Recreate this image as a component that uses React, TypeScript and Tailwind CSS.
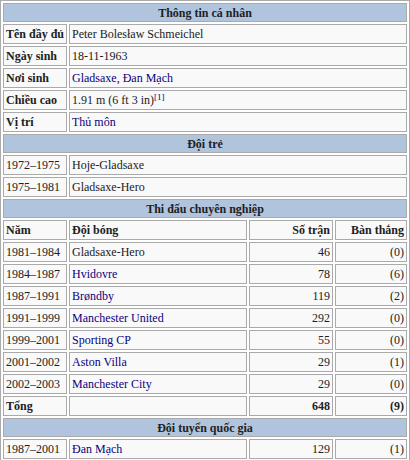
import React from 'react';

const LINK = 'text-[#0b0080]';

interface Career {
  years: string;
  club: string;
  link?: boolean;
  apps: string;
  goals: string;
}

const career: Career[] = [
  { years: '1981–1984', club: 'Gladsaxe-Hero', apps: '46', goals: '(0)' },
  { years: '1984–1987', club: 'Hvidovre', link: true, apps: '78', goals: '(6)' },
  { years: '1987–1991', club: 'Brøndby', link: true, apps: '119', goals: '(2)' },
  { years: '1991–1999', club: 'Manchester United', link: true, apps: '292', goals: '(0)' },
  { years: '1999–2001', club: 'Sporting CP', link: true, apps: '55', goals: '(0)' },
  { years: '2001–2002', club: 'Aston Villa', link: true, apps: '29', goals: '(1)' },
  { years: '2002–2003', club: 'Manchester City', link: true, apps: '29', goals: '(0)' },
];

const cell =
  'border border-[#aaaaaa] bg-[#f9f9f9] px-[2px] py-0 h-[20px] leading-[14px] align-middle whitespace-nowrap overflow-hidden';
const head =
  'border border-[#aaaaaa] bg-[#b0c4de] px-[2px] py-0 h-[19px] leading-[14px] text-center font-bold whitespace-nowrap';

const Header = ({ title }: { title: string }) => (
  <tr>
    <th colSpan={4} className={head}>
      {title}
    </th>
  </tr>
);

const InfoRow = ({ label, children }: { label: string; children: React.ReactNode }) => (
  <tr>
    <th className={`${cell} text-left font-bold`}>{label}</th>
    <td colSpan={3} className={cell}>
      {children}
    </td>
  </tr>
);

export default function App() {
  return (
    <div className="w-[410px] bg-white">
      <table
        className="w-[410px] table-fixed border-separate border-spacing-[2px] border border-[#aaaaaa] text-[12px] text-[#202122]"
        style={{ fontFamily: '"Liberation Serif", "Times New Roman", serif' }}
      >
        <colgroup>
          <col className="w-[64px]" />
          <col className="w-[178px]" />
          <col className="w-[84px]" />
          <col className="w-[72px]" />
        </colgroup>
        <tbody>
          <Header title="Thông tin cá nhân" />
          <InfoRow label="Tên đầy đủ">Peter Bolesław Schmeichel</InfoRow>
          <InfoRow label="Ngày sinh">18-11-1963</InfoRow>
          <InfoRow label="Nơi sinh">
            <span className={LINK}>Gladsaxe, Đan Mạch</span>
          </InfoRow>
          <InfoRow label="Chiều cao">
            1.91 m (6 ft 3 in)
            <sup className={`${LINK} text-[9px]`}>[1]</sup>
          </InfoRow>
          <InfoRow label="Vị trí">
            <span className={LINK}>Thủ môn</span>
          </InfoRow>

          <Header title="Đội trẻ" />
          <tr>
            <td className={cell}>1972–1975</td>
            <td colSpan={3} className={cell}>Hoje-Gladsaxe</td>
          </tr>
          <tr>
            <td className={cell}>1975–1981</td>
            <td colSpan={3} className={cell}>Gladsaxe-Hero</td>
          </tr>

          <Header title="Thi đấu chuyên nghiệp" />
          <tr>
            <th className={`${cell} text-left font-bold`}>Năm</th>
            <th className={`${cell} text-left font-bold`}>Đội bóng</th>
            <th className={`${cell} text-right font-bold`}>Số trận</th>
            <th className={`${cell} text-right font-bold`}>Bàn thắng</th>
          </tr>
          {career.map((c) => (
            <tr key={c.years}>
              <td className={cell}>{c.years}</td>
              <td className={cell}>{c.link ? <span className={LINK}>{c.club}</span> : c.club}</td>
              <td className={`${cell} text-right`}>{c.apps}</td>
              <td className={`${cell} text-right`}>{c.goals}</td>
            </tr>
          ))}
          <tr>
            <th className={`${cell} text-left font-bold`}>Tổng</th>
            <td className={cell}></td>
            <th className={`${cell} text-right font-bold`}>648</th>
            <th className={`${cell} text-right font-bold`}>(9)</th>
          </tr>

          <Header title="Đội tuyển quốc gia" />
          <tr>
            <td className={cell}>1987–2001</td>
            <td className={cell}>
              <span className={LINK}>Đan Mạch</span>
            </td>
            <td className={`${cell} text-right`}>129</td>
            <td className={`${cell} text-right`}>(1)</td>
          </tr>
        </tbody>
      </table>
    </div>
  );
}
